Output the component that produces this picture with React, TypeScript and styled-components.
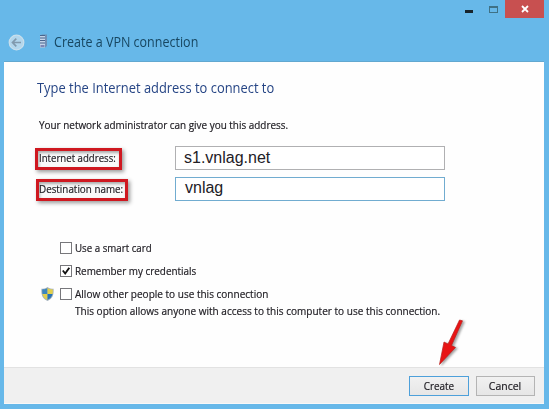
import React from "react";
import styled, { createGlobalStyle } from "styled-components";

const GlobalStyle = createGlobalStyle`
  * { box-sizing: border-box; }
  html, body { margin: 0; padding: 0; overflow: hidden; }
  body { font-family: "Open Sans", "Noto Sans", sans-serif; font-size: 11px; color: #222; }
`;

const Window = styled.div`
  position: relative;
  width: 549px;
  height: 409px;
  display: flex;
  flex-direction: column;
  padding: 0 5px 5px 4px;
  background: #67b8e9;
`;

const TitleBar = styled.div`
  display: flex;
  justify-content: flex-end;
  height: 26px;
`;

const Minimize = styled.div`
  width: 8px;
  height: 3px;
  margin: 10px 16px 0 0;
  background: #17242c;
`;

const Maximize = styled.div`
  width: 9px;
  height: 7px;
  margin: 6px 7px 0 0;
  border: 1px solid #3f7185;
  border-top-width: 2px;
`;

const Close = styled.div`
  display: flex;
  align-items: center;
  justify-content: center;
  width: 39px;
  height: 18px;
  background: #c85050;
`;

const Header = styled.div`
  display: flex;
  align-items: center;
  height: 35px;
  padding: 0 0 3px 4px;
`;

const BackIcon = styled.svg`
  width: 17px;
  height: 17px;
  margin-right: 14px;
`;

const ServerIcon = styled.svg`
  width: 9px;
  height: 14px;
  margin: 0 6px 2px 0;
`;

const Text = styled.span<{ $size?: number; $narrow?: number; $color?: string; $center?: boolean }>`
  display: inline-block;
  white-space: nowrap;
  font-size: ${(p) => p.$size ?? 11}px;
  color: ${(p) => p.$color ?? "#222026"};
  -webkit-text-stroke: ${(p) => (p.$size ? 0 : 0.2)}px;
  line-height: 16px;
  transform: scaleX(${(p) => p.$narrow ?? 1});
  transform-origin: ${(p) => (p.$center ? "center" : "left")};
`;

const Panel = styled.div`
  flex: 1;
  display: flex;
  flex-direction: column;
  background: #fefefe;
  border: 1px solid #62a8d0;
  border-width: 1px 0 0 0;
`;

const Body = styled.div`
  flex: 1;
  display: flex;
  flex-direction: column;
`;

const Heading = styled.div`
  display: flex;
  height: 16px;
  margin: 17px 0 0 33px;
`;

const Intro = styled.div`
  display: flex;
  height: 16px;
  margin: 22px 0 13px 35px;
`;

const Field = styled.div<{ $gap?: number }>`
  display: flex;
  align-items: center;
  height: 24px;
  margin-bottom: ${(p) => p.$gap ?? 0}px;
`;

const LabelCell = styled.div<{ $indent: number }>`
  width: 171px;
  padding: 1px 0 0 ${(p) => p.$indent}px;
`;

const Highlight = styled.div<{ $width: number; $inset: number }>`
  display: flex;
  align-items: center;
  width: ${(p) => p.$width}px;
  height: 22px;
  padding: 0 0 1px ${(p) => p.$inset}px;
  border: 3px solid #cf1820;
  background: #fafafa;
  box-shadow: 2px 2px 4px #999, inset 1px 2px 3px #aaa;
`;

const Entry = styled.div<{ $active?: boolean; $left: number }>`
  display: flex;
  align-items: center;
  width: 270px;
  height: 24px;
  padding: 0 0 ${(p) => (p.$active ? 2 : 0)}px ${(p) => p.$left}px;
  font-family: "Liberation Sans", Arial, sans-serif;
  border: 1px solid ${(p) => (p.$active ? "#71acd0" : "#b0b0b2")};
  background: #fff;
`;

const Options = styled.div`
  display: flex;
  flex-direction: column;
  margin: 35px 0 0 37px;
`;

const Option = styled.div`
  display: flex;
  align-items: center;
  height: 23px;
`;

const IconSlot = styled.div`
  display: flex;
  width: 19px;
`;

const Check = styled.div`
  display: flex;
  width: 12px;
  height: 12px;
  margin-right: 3px;
  border: 1px solid #77777b;
  background: #fff;
`;

const Hint = styled.div`
  display: flex;
  height: 16px;
  margin: -2px 0 0 34px;
`;

const Footer = styled.div`
  display: flex;
  gap: 7px;
  height: 37px;
  padding: 8px 0 0 405px;
  background: #f0f0f0;
  border-top: 1px solid #e2e2e2;
  border-bottom: 1px solid #f8f8f8;
`;

const Button = styled.div<{ $primary?: boolean }>`
  display: flex;
  align-items: center;
  justify-content: center;
  width: ${(p) => (p.$primary ? 60 : 59)}px;
  height: 20px;
  padding-bottom: 1px;
  background: linear-gradient(#f1f1f1, #e6e6e6);
  border: 1px solid ${(p) => (p.$primary ? "#4da0da" : "#b4b4b4")};
`;

const Pointer = styled.svg`
  position: absolute;
  left: 432px;
  top: 314px;
  width: 40px;
  height: 58px;
  filter: drop-shadow(2px 1px 1px rgba(70, 70, 70, 0.5));
`;

const Shield = () => (
  <svg width="13" height="14" viewBox="0 0 13 14">
    <defs>
      <clipPath id="shield">
        <path d="M6.5 1 C4.5 2.3 3 2.3 1.2 2.5 C1 7.5 2 10.8 6.5 13 C11 10.8 12 7.5 11.8 2.5 C10 2.3 8.5 2.3 6.5 1Z" />
      </clipPath>
    </defs>
    <path d="M6.5 0 C4.5 1.6 2.5 1.8 .4 1.8 C0 8 1.5 12 6.5 14 C11.5 12 13 8 12.6 1.8 C10.5 1.8 8.5 1.6 6.5 0Z" fill="#a3b1bd" />
    <g clipPath="url(#shield)">
      <path d="M0 0H6.5V7H0Z" fill="#3c86bd" />
      <path d="M6.5 0H13V7H6.5Z" fill="#e2d04b" />
      <path d="M0 7H6.5V14H0Z" fill="#e2cf4c" />
      <path d="M6.5 7H13V14H6.5Z" fill="#2873b5" />
    </g>
  </svg>
);

export default function App() {
  return (
    <>
      <GlobalStyle />
      <Window>
        <TitleBar>
          <Minimize />
          <Maximize />
          <Close>
            <svg width="8" height="8" viewBox="0 0 8 8">
              <path d="M1 1L7 7M7 1L1 7" stroke="#fff" strokeWidth="1.8" />
            </svg>
          </Close>
        </TitleBar>
        <Header>
          <BackIcon viewBox="0 0 17 17">
            <circle cx="8.5" cy="8.5" r="7.3" fill="#b2d6ec" stroke="#c9dfec" strokeWidth="1.2" />
            <path d="M13 8.5H4.5M8.3 4.7L4.5 8.5L8.3 12.3" fill="none" stroke="#8099ad" strokeWidth="1.7" />
          </BackIcon>
          <ServerIcon viewBox="0 0 9 14">
            <path d="M1 2L3 .5H8V12L6 13.5H1Z" fill="#6f8fb5" />
            <path d="M1 2H6V13.5H1Z" fill="#c3d4e9" />
            <path d="M1 1.5H6M1 4H6M1 6.5H6M1 9H6" stroke="#49658d" />
            <path d="M1.5 11H5.5V13H1.5Z" fill="#7c87b6" />
          </ServerIcon>
          <Text $size={14} $narrow={0.894} $color="#174660">Create a VPN connection</Text>
        </Header>
        <Panel>
          <Body>
            <Heading><Text $size={15} $narrow={0.86} $color="#264585">Type the Internet address to connect to</Text></Heading>
            <Intro><Text $narrow={0.902}>Your network administrator can give you this address.</Text></Intro>
            <Field $gap={7}>
              <LabelCell $indent={31}><Highlight $width={87} $inset={1}><Text $narrow={0.875}>Internet address:</Text></Highlight></LabelCell>
              <Entry $left={8}><Text $size={16}>s1.vnlag.net</Text></Entry>
            </Field>
            <Field>
              <LabelCell $indent={32}><Highlight $width={92} $inset={0}><Text $narrow={0.895}>Destination name:</Text></Highlight></LabelCell>
              <Entry $active $left={9}><Text $size={16}>vnlag</Text></Entry>
            </Field>
            <Options>
              <Option><IconSlot /><Check /><Text $narrow={0.885}>Use a smart card</Text></Option>
              <Option>
                <IconSlot />
                <Check>
                  <svg width="10" height="10" viewBox="0 0 10 10">
                    <path d="M1.8 4.5L4.2 7.5L8.3 1.8" fill="none" stroke="#111" strokeWidth="1.9" />
                  </svg>
                </Check>
                <Text $narrow={0.9}>Remember my credentials</Text>
              </Option>
              <Option><IconSlot><Shield /></IconSlot><Check /><Text $narrow={0.911}>Allow other people to use this connection</Text></Option>
              <Hint><Text $narrow={0.912}>This option allows anyone with access to this computer to use this connection.</Text></Hint>
            </Options>
          </Body>
          <Footer>
            <Button $primary><Text $narrow={0.9} $center>Create</Text></Button>
            <Button><Text $narrow={0.95} $center>Cancel</Text></Button>
          </Footer>
        </Panel>
        <Pointer viewBox="0 0 40 58">
          <path d="M27.5 6L30.5 6.8L19.5 31.5L23.5 33.5L7.5 50.5L12 28L16 30Z" fill="#e81414" stroke="#b8201c" strokeWidth=".7" />
        </Pointer>
      </Window>
    </>
  );
}
